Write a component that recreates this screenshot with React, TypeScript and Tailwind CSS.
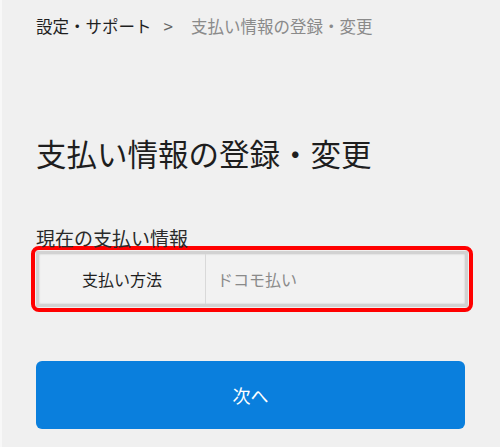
export default function App() {
  return (
    <div
      className="min-h-[447px] w-[500px] border-l-2 border-[#f8f8f8] bg-[#f0f0f0] pl-[34px] pr-[35px]"
      style={{ fontFamily: '"Noto Sans CJK JP", "Noto Sans", sans-serif' }}
    >
      <div className="flex items-center pt-[17px] text-[16.5px] leading-[18px]">
        <span className="text-[#1f1f1f]">設定・サポート</span>
        <span className="ml-[12px] text-[17px] text-[#666666]">&gt;</span>
        <span className="ml-[18px] text-[#8a8a8a]">支払い情報の登録・変更</span>
      </div>

      <h1 className="mt-[100px] text-[30.5px] leading-[36px] font-normal text-[#1e1e1e]">
        支払い情報の登録・変更
      </h1>

      <p className="mt-[58px] text-[19px] leading-[18px] text-[#2a2a2a]">現在の支払い情報</p>

      <div className="-ml-[5px] mt-[-1px] h-[66px] w-[442px] rounded-[8px] border-4 border-[#ff0000] p-[1px]">
        <div className="flex h-full border-[3px] border-[#d2d2d2] bg-[#f2f2f2] shadow-[inset_0_0_2px_rgba(0,0,0,0.2)]">
          <div className="flex w-[167px] items-center justify-center border-r border-[#d9d9d9] text-[16px] text-[#1f1f1f]">
            支払い方法
          </div>
          <div className="flex flex-1 items-center pl-[11px] text-[16px] text-[#8a8a8a]">ドコモ払い</div>
        </div>
      </div>

      <button
        type="button"
        className="mt-[49px] flex h-[68px] w-full items-center justify-center rounded-[6px] bg-[#0a7fdd] text-[18px] text-white"
      >
        次へ
      </button>
    </div>
  )
}
